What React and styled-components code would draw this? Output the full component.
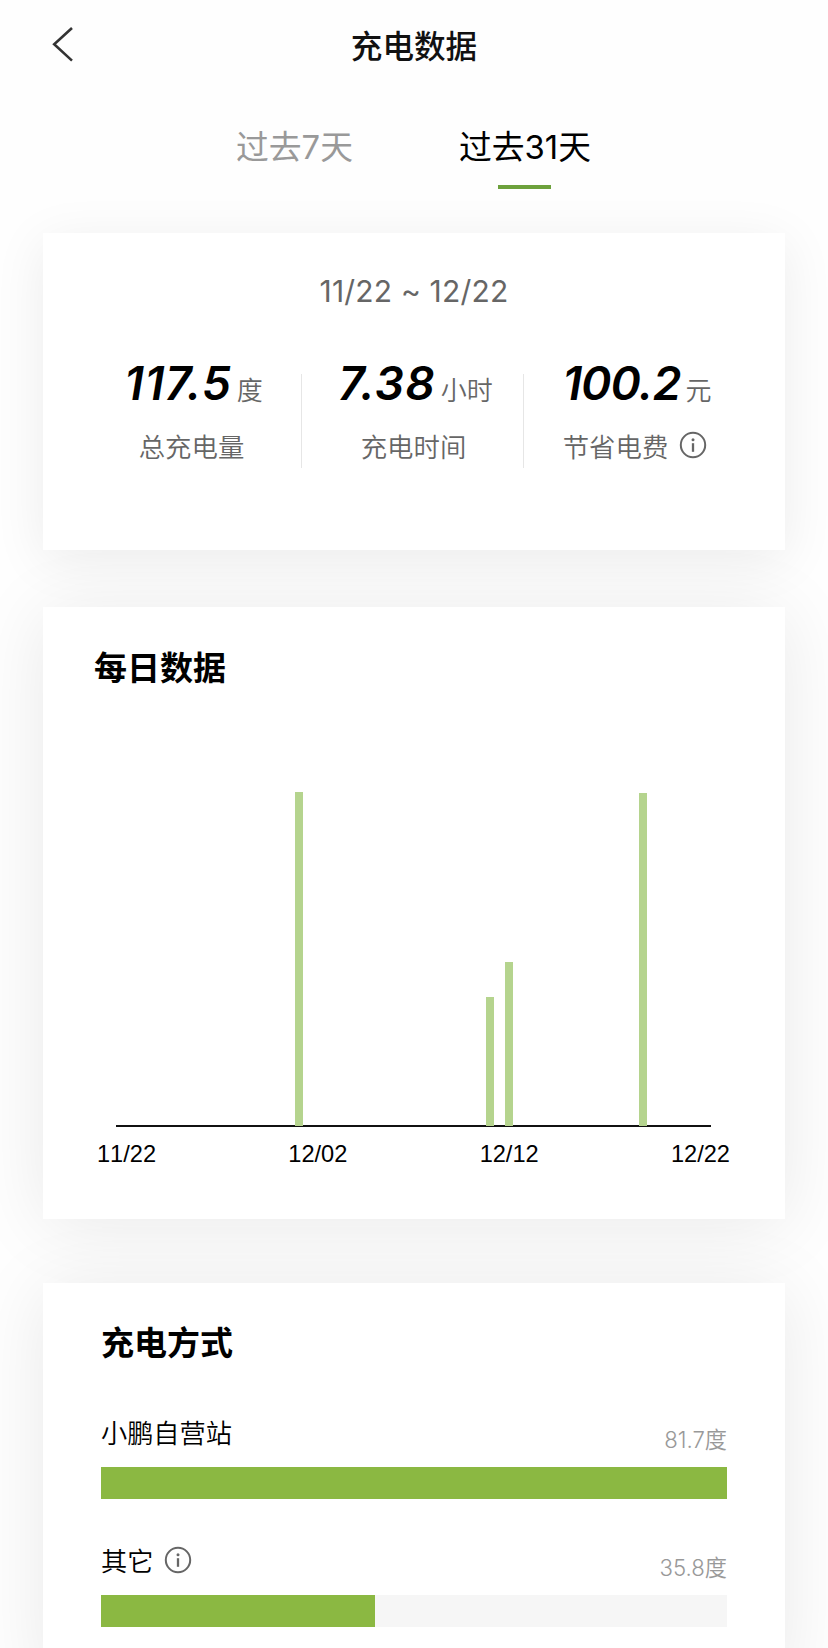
//Charging statistics page
import React, { useState } from "react";
import styled, { createGlobalStyle } from "styled-components";

const GlobalStyle = createGlobalStyle`
  * {
    box-sizing: border-box;
  }

  body {
    margin: 0;
    background-color: #fefefe;
    font-family: Inter, "Noto Sans CJK SC", sans-serif;
    color: #000;
  }
`;

const TABS = ["过去7天", "过去31天"];

const STATS = [
  { value: "117.5", unit: "度", label: "总充电量", tracking: 0.9 },
  { value: "7.38", unit: "小时", label: "充电时间", tracking: 1.1 },
  {
    value: "100.2",
    unit: "元",
    label: "节省电费",
    tracking: -0.8,
    hasInfo: true,
  },
];

const DAYS = 31;
const MAX_HEIGHT = 334;

// day index -> share of the highest day
const DAILY = { 9: 1, 19: 0.387, 20: 0.49, 27: 0.998 };
const TICKS = ["11/22", "12/02", "12/12", "12/22"];

const METHODS = [
  { name: "小鹏自营站", value: 81.7, percent: 100 },
  { name: "其它", value: 35.8, percent: 43.8, hasInfo: true },
];

function InfoIcon() {
  return (
    <Icon width="28" height="28" viewBox="0 0 28 28" fill="none">
      <circle cx="14" cy="14" r="12.2" stroke="#666" strokeWidth="2" />
      <circle cx="14" cy="8.7" r="1.5" fill="#666" />
      <path d="M14 12.2V20.8" stroke="#666" strokeWidth="2.3" />
    </Icon>
  );
}

function DailyChart() {
  return (
    <Chart>
      <Plot>
        {Array.from({ length: DAYS }, (_, day) => (
          <Slot key={day}>
            {DAILY[day] && <Bar style={{ height: DAILY[day] * MAX_HEIGHT }} />}
          </Slot>
        ))}
      </Plot>
      <Ticks>
        {TICKS.map((tick) => (
          <span key={tick}>{tick}</span>
        ))}
      </Ticks>
    </Chart>
  );
}

function App() {
  const [active, setActive] = useState(1);
  return (
    <Page>
      <GlobalStyle />
      <Header>
        <BackButton aria-label="返回">
          <svg width="22" height="35" viewBox="0 0 22 35" fill="none">
            <path d="M20 1L2.2 17.3L20 33.6" stroke="#333" strokeWidth="2.6" />
          </svg>
        </BackButton>
        <PageTitle>充电数据</PageTitle>
      </Header>

      <TabBar>
        {TABS.map((tab, index) => (
          <Tab
            key={tab}
            $active={index === active}
            onClick={() => setActive(index)}
          >
            {tab}
          </Tab>
        ))}
      </TabBar>

      <SummaryCard>
        <DateRange>11/22 ~ 12/22</DateRange>
        <Stats>
          {STATS.map((stat) => (
            <Stat key={stat.label}>
              <StatValue>
                <Value $tracking={stat.tracking}>{stat.value}</Value>
                <Unit>{stat.unit}</Unit>
              </StatValue>
              <StatLabel>
                {stat.label}
                {stat.hasInfo && <InfoIcon />}
              </StatLabel>
            </Stat>
          ))}
        </Stats>
      </SummaryCard>

      <DailyCard>
        <CardTitle>每日数据</CardTitle>
        <DailyChart />
      </DailyCard>

      <MethodCard>
        <CardTitle>充电方式</CardTitle>
        {METHODS.map((method) => (
          <Method key={method.name}>
            <MethodRow>
              <MethodName>
                {method.name}
                {method.hasInfo && <InfoIcon />}
              </MethodName>
              <Amount>{method.value}度</Amount>
            </MethodRow>
            <Track>
              <Fill style={{ width: `${method.percent}%` }} />
            </Track>
          </Method>
        ))}
      </MethodCard>
    </Page>
  );
}

export default App;

const Page = styled.div`
  width: 828px;
  height: 1648px;
  overflow: hidden;
  background-color: #fefefe;
`;

const Header = styled.header`
  display: grid;
  grid-template-columns: 100px 1fr 100px;
  align-items: center;
  height: 89px;
`;

const BackButton = styled.button`
  display: flex;
  padding: 0 0 0 52px;
  border: 0;
  background: none;
`;

const PageTitle = styled.h1`
  margin: 0;
  padding-top: 4px;
  text-align: center;
  font-size: 31.6px;
  line-height: 46px;
  font-weight: 500;
  color: #111;
`;

const TabBar = styled.nav`
  display: flex;
  gap: 106px;
  height: 144px;
  padding: 35px 0 0 236px;
`;

const Tab = styled.button`
  display: flex;
  flex-direction: column;
  align-items: center;
  height: 67px;
  padding: 0;
  border: 0;
  background: none;
  font-family: inherit;
  font-size: 32.8px;
  line-height: 46px;
  font-weight: 400;
  white-space: nowrap;
  color: ${(props) => (props.$active ? "#000" : "#999")};

  &::after {
    content: "";
    width: 53px;
    height: 4px;
    margin-top: 15px;
    background-color: ${(props) => (props.$active ? "#6da13c" : "transparent")};
  }
`;

const Card = styled.section`
  width: 742px;
  margin-left: 43px;
  background-color: #fff;
  box-shadow: 0 6px 70px rgba(0, 0, 0, 0.085);
`;

const SummaryCard = styled(Card)`
  height: 317px;
  padding-top: 38px;
  box-shadow: 0 10px 50px rgba(0, 0, 0, 0.075);
`;

const DateRange = styled.div`
  text-align: center;
  font-size: 30px;
  line-height: 40px;
  font-weight: 400;
  letter-spacing: 0.2px;
  color: #666;
`;

const Stats = styled.div`
  display: grid;
  grid-template-columns: 222px 222px 222px;
  margin: 63px 0 0 37px;
  height: 94px;
`;

const Stat = styled.div`
  display: flex;
  flex-direction: column;
  align-items: center;
  padding-left: 2px;
  border-right: 1px solid #e6e6e6;

  &:last-child {
    padding-left: 0;
    border-right: 0;
  }
`;

const StatValue = styled.div`
  display: flex;
  align-items: baseline;
  height: 56px;
  margin-top: -19px;
  padding-left: 4px;
  line-height: 56px;
`;

const Value = styled.span`
  font-size: 46px;
  font-style: italic;
  font-weight: 600;
  letter-spacing: ${(props) => props.$tracking}px;
`;

const Unit = styled.span`
  margin-left: 5px;
  font-size: 26px;
  font-weight: 350;
  color: #666;
`;

const StatLabel = styled.div`
  display: flex;
  align-items: center;
  height: 36px;
  margin-top: 16px;
  font-size: 26.4px;
  font-weight: 350;
  color: #666;
`;

const Icon = styled.svg`
  flex: none;
  margin-left: 11px;
`;

const CardTitle = styled.h2`
  margin: 0;
  font-size: 33px;
  line-height: 48px;
  font-weight: 700;
`;

const DailyCard = styled(Card)`
  height: 612px;
  margin-top: 57px;
  padding: 37px 0 0 51px;
`;

const Chart = styled.div`
  margin-top: 100px;
`;

const Plot = styled.div`
  display: grid;
  grid-template-columns: repeat(31, 1fr);
  align-items: end;
  width: 595px;
  height: 335px;
  margin-left: 22px;
  padding: 0 1px 1px;
  background: linear-gradient(#111, #111) bottom / 100% 2px no-repeat;
`;

const Slot = styled.div`
  display: flex;
  justify-content: center;
`;

const Bar = styled.div`
  width: 8px;
  background-color: #b5d48e;
`;

const Ticks = styled.div`
  display: flex;
  justify-content: space-between;
  width: 633px;
  margin: 13px 0 0 3px;
  font-family: "Liberation Sans", sans-serif;
  font-size: 23.6px;
  line-height: 28px;
  font-kerning: none;
`;

const MethodCard = styled(Card)`
  height: 400px;
  margin-top: 64px;
  padding: 36px 58px 0 58px;
`;

const Method = styled.div`
  padding-top: 43px;

  & + & {
    padding-top: 39px;
  }
`;

const MethodRow = styled.div`
  display: flex;
  justify-content: space-between;
  height: 57px;
`;

const MethodName = styled.div`
  display: flex;
  align-items: center;
  height: 44px;
  font-size: 26.2px;
  font-weight: 350;
`;

const Amount = styled.div`
  padding-top: 13px;
  font-size: 22.2px;
  line-height: 34px;
  font-weight: 350;
  color: #999;
`;

const Track = styled.div`
  height: 32px;
  background-color: #f6f6f6;
`;

const Fill = styled.div`
  height: 100%;
  background-color: #8bb842;
`;
